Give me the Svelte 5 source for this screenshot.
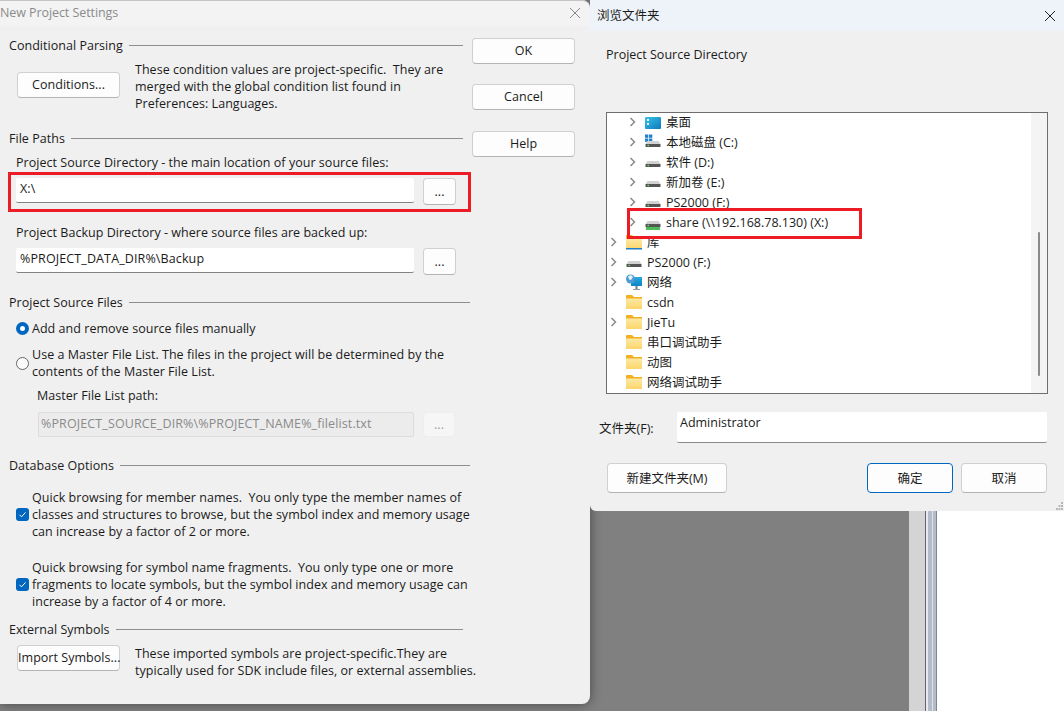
<script>
  const rows = [
    { lvl: 1, arrow: true, icon: 'desktop', text: '桌面' },
    { lvl: 1, arrow: true, icon: 'win', text: '本地磁盘 (C:)' },
    { lvl: 1, arrow: true, icon: 'drive', text: '软件 (D:)' },
    { lvl: 1, arrow: true, icon: 'drive', text: '新加卷 (E:)' },
    { lvl: 1, arrow: true, icon: 'drive', text: 'PS2000 (F:)' },
    { lvl: 1, arrow: true, icon: 'share', text: 'share (\\\\192.168.78.130) (X:)' },
    { lvl: 0, arrow: true, icon: 'lib', text: '库' },
    { lvl: 0, arrow: true, icon: 'drive', text: 'PS2000 (F:)' },
    { lvl: 0, arrow: true, icon: 'net', text: '网络' },
    { lvl: 0, arrow: false, icon: 'folder', text: 'csdn' },
    { lvl: 0, arrow: true, icon: 'folder', text: 'JieTu' },
    { lvl: 0, arrow: false, icon: 'folder', text: '串口调试助手' },
    { lvl: 0, arrow: false, icon: 'folder', text: '动图' },
    { lvl: 0, arrow: false, icon: 'folder', text: '网络调试助手' }
  ];
</script>

<div class="desk">
  <div class="side">
    <div class="gray"></div>
    <div class="rail"></div>
    <div class="strip"></div>
    <div class="white"></div>
  </div>

  <section class="dlg left">
    <header class="ltitle"><span>New Project Settings</span>
      <svg class="x" width="12" height="12" viewBox="0 0 12 12"><path d="M1 1l10 10M11 1L1 11" stroke="#8a8a8a" fill="none"/></svg>
    </header>
    <div class="lbody">
      <div class="lcol">
        <div class="head h1"><span>Conditional Parsing</span><i></i></div>
        <div class="cond">
          <button class="btn wide">Conditions...</button>
          <p>These condition values are project-specific.&nbsp; They are<br>merged with the global condition list found in<br>Preferences: Languages.</p>
        </div>
        <div class="head h2"><span>File Paths</span><i></i></div>
        <div class="lab l1">Project Source Directory - the main location of your source files:</div>
        <div class="pathrow">
          <div class="inp">X:\</div><button class="btn dots">...</button>
          <div class="red r1"></div>
        </div>
        <div class="lab l2">Project Backup Directory - where source files are backed up:</div>
        <div class="pathrow">
          <div class="inp">%PROJECT_DATA_DIR%\Backup</div><button class="btn dots">...</button>
        </div>
        <div class="head h3 long"><span>Project Source Files</span><i></i></div>
        <div class="opt o1"><span class="radio on"></span><span>Add and remove source files manually</span></div>
        <div class="opt o2"><span class="radio"></span><span>Use a Master File List. The files in the project will be determined by the<br>contents of the Master File List.</span></div>
        <div class="lab l3">Master File List path:</div>
        <div class="pathrow dis">
          <div class="inp off">%PROJECT_SOURCE_DIR%\%PROJECT_NAME%_filelist.txt</div><button class="btn dots offb">...</button>
        </div>
        <div class="head h4 long"><span>Database Options</span><i></i></div>
        <div class="opt o3"><span class="check"><svg width="13" height="13" viewBox="0 0 13 13"><path d="M3.5 6.8l2 2 4-4.4" stroke="#fff" fill="none"/></svg></span><span>Quick browsing for member names.&nbsp; You only type the member names of<br>classes and structures to browse, but the symbol index and memory usage<br>can increase by a factor of 2 or more.</span></div>
        <div class="opt o4"><span class="check"><svg width="13" height="13" viewBox="0 0 13 13"><path d="M3.5 6.8l2 2 4-4.4" stroke="#fff" fill="none"/></svg></span><span>Quick browsing for symbol name fragments.&nbsp; You only type one or more<br>fragments to locate symbols, but the symbol index and memory usage can<br>increase by a factor of 4 or more.</span></div>
        <div class="head h5"><span>External Symbols</span><i></i></div>
        <div class="cond ext">
          <button class="btn wide tight">Import Symbols...</button>
          <p>These imported symbols are project-specific.They are<br>typically used for SDK include files, or external assemblies.</p>
        </div>
      </div>
      <div class="rcol">
        <button class="btn act">OK</button>
        <button class="btn act">Cancel</button>
        <button class="btn act help">Help</button>
      </div>
    </div>
  </section>

  <section class="dlg right">
    <header class="rtitle"><span>浏览文件夹</span>
      <svg width="12" height="12" viewBox="0 0 12 12"><path d="M1 1l10 10M11 1L1 11" stroke="#222" fill="none"/></svg>
    </header>
    <div class="rbody">
      <div class="desc">Project Source Directory</div>
      <div class="tree">
        <svg class="defs" width="0" height="0" aria-hidden="true">
          <defs>
            <linearGradient id="deskg" x1="0" y1="0" x2="1" y2="1"><stop offset="0" stop-color="#35c3e8"/><stop offset="1" stop-color="#0f78bc"/></linearGradient>
            <linearGradient id="foldg" x1="0" y1="0" x2="0" y2="1"><stop offset="0" stop-color="#fde9a4"/><stop offset="1" stop-color="#fbd56a"/></linearGradient>
            <linearGradient id="monig" x1="0" y1="0" x2="0" y2="1"><stop offset="0" stop-color="#27a9e0"/><stop offset="1" stop-color="#1083c4"/></linearGradient>
          </defs>
        </svg>
        <div class="list">
          {#each rows as r}
            <div class="row" class:sub={r.lvl === 1}>
              <span class="chev">
                {#if r.arrow}<svg width="8" height="10" viewBox="0 0 8 10"><path d="M1.500 1l4 4-4 4" stroke="#8a8a8a" stroke-width="1.5" fill="none"/></svg>{/if}
              </span>
              <svg class="ico" width="16" height="16" viewBox="0 0 16 16">
                {#if r.icon === 'desktop'}
                  <rect x="0" y="3" width="16" height="12" rx="1" fill="url(#deskg)"/>
                  <rect x="2" y="5" width="2" height="2" fill="#e8f6fc"/>
                  <rect x="2" y="9" width="2" height="2" fill="#e8f6fc"/>
                {:else if r.icon === 'folder' || r.icon === 'lib'}
                  <path d="M0 2a1 1 0 0 1 1-1h5l2 2h8v12H0z" fill="#f0b020"/>
                  <rect x="0" y="4.500" width="16" height="10.500" fill="url(#foldg)"/>
                  {#if r.icon === 'lib'}<rect x="0" y="14" width="16" height="1.500" fill="#1f7fc8"/>{/if}
                {:else if r.icon === 'net'}
                  <rect x="5" y="3" width="11" height="9" fill="url(#monig)"/>
                  <rect x="9.500" y="12" width="2" height="3" fill="#6d7c88"/>
                  <rect x="7" y="15" width="7" height="1" fill="#8d99a3"/>
                  <circle cx="4.500" cy="5" r="4.500" fill="#4f9bd0"/>
                  <path d="M2 2.500l3-1.500 2 2-1.500 2.500-2 .5z" fill="#e4f2fb"/>
                {:else}
                  {#if r.icon === 'win'}
                    <rect x="0" y="0.500" width="3.300" height="3.300" fill="#1f82d0"/><rect x="4" y="0.500" width="3.300" height="3.300" fill="#1f82d0"/>
                    <rect x="0" y="4.500" width="3.300" height="3.300" fill="#1f82d0"/><rect x="4" y="4.500" width="3.300" height="3.300" fill="#1f82d0"/>
                  {/if}
                  <path d="M2.500 7h11l2 3h-15z" fill="#d2d2d2"/>
                  <rect x="0.500" y="10" width="15" height="3" rx=".5" fill="#555"/>
                  <rect x="2.500" y="10.800" width="1.500" height="1.300" fill="#5fe05f"/>
                  {#if r.icon === 'share'}<rect x="1" y="13" width="14" height="3" fill="#4cbb58"/>{/if}
                {/if}
              </svg>
              <span class="name">{r.text}</span>
            </div>
          {/each}
        </div>
        <div class="sbar"><b></b></div>
        <div class="red r2"></div>
      </div>
      <div class="folder"><label for="fld">文件夹(F):</label><div id="fld" class="finp">Administrator</div></div>
      <div class="foot">
        <button class="btn cn newf">新建文件夹(M)</button>
        <span class="sp"></span>
        <button class="btn cn ok">确定</button>
        <button class="btn cn">取消</button>
      </div>
    </div>
    <svg class="grip" width="8" height="8" viewBox="0 0 8 8"><g fill="#b8b8b8"><rect x="5" y="0" width="2" height="2"/><rect x="2.500" y="3" width="2" height="2"/><rect x="5" y="3" width="2" height="2"/><rect x="0" y="6" width="2" height="2"/><rect x="2.500" y="6" width="2" height="2"/><rect x="5" y="6" width="2" height="2"/></g></svg>
  </section>
</div>

<style>
  :global(body) { margin: 0; }
  .desk {
    position: relative; width: 1064px; height: 711px; overflow: hidden;
    background: #808080; color: #1b1b1b;
    font: 12.5px/17px "Open Sans", "Noto Sans CJK SC", sans-serif;
  }
  .side { position: absolute; inset: 0; display: flex; padding-left: 909px; }
  .gray { width: 16px; background: #d4d4d4; }
  .rail { width: 1px; background: #666; }
  .strip { width: 11px; background: linear-gradient(90deg,#e6eaf0 0 2px,#b4bcc9 2px 6px,#dfe4ea 6px 7px,#b4bcc9 7px 10px,#7d8796 10px); }
  .white { flex: 1; background: #fff; }
  .dlg { position: absolute; background: #f0f0f0; }
  .left { left: 0; top: 0; width: 590px; height: 704px; border-radius: 0 8px 8px 0; box-shadow: 0 0 12px rgba(0,0,0,.45); letter-spacing: .035px; }
  .right { left: 590px; top: 0; width: 474px; height: 511px; border-bottom-left-radius: 6px; display: flex; flex-direction: column; }
  .ltitle { height: 26px; background: #f3f3f3; color: #8b8b8b; display: flex; align-items: center; justify-content: space-between; padding: 0 9px 2px 0; border-top: 1px solid #c4c4c4; box-sizing: border-box; border-top-right-radius: 8px; letter-spacing: -.08px; }
  .lbody { display: flex; height: 678px; }
  .lcol { width: 472px; padding-left: 9px; box-sizing: border-box; }
  .rcol { display: flex; flex-direction: column; gap: 20px; padding-top: 12px; width: 103px; }
  .btn { font: inherit; letter-spacing: inherit; color: inherit; background: #fdfdfd; border: 1px solid #d0d0d0; border-bottom-color: #b4b4b4; border-radius: 4px; padding: 0; box-sizing: border-box; display: block; }
  .act { height: 26px; width: 103px; padding-bottom: 2px; }
  .help { margin-top: 1px; }
  .head { display: flex; align-items: center; gap: 6px; height: 17px; margin-right: 9px; }
  .head i { flex: 1; height: 1px; background: #8e8e8e; }
  .head.long { margin-right: 2px; }
  .h1 { margin-top: 11px; }
  .cond { display: flex; align-items: flex-start; gap: 15px; padding-left: 8px; margin-top: 7px; }
  .cond p { margin: 0; white-space: nowrap; }
  .cond .wide { flex: none; width: 103px; height: 26px; margin-top: 11px; padding-bottom: 2px; }
  .tight { white-space: nowrap; }
  .h2 { margin-top: 18px; }
  .lab { padding-left: 7px; white-space: nowrap; }
  .l1 { margin-top: 7px; }
  .l2 { margin-top: 19px; }
  .l3 { padding-left: 28px; margin-top: 7px; }
  .pathrow { position: relative; display: flex; gap: 9px; margin: 7px 0 0 7px; height: 27px; }
  .inp { width: 398px; height: 25px; background: #fff; border-bottom: 1px solid #838383; box-sizing: border-box; padding: 1px 4px; line-height: 19px; border-radius: 2px; letter-spacing: .12px; }
  .dots { width: 33px; height: 27px; line-height: 24px; }
  .dis { margin-left: 29px; margin-top: 8px; height: 25px; }
  .off { width: 376px; height: 25px; background: #ececec; border: 1px solid #dcdcdc; color: #8a8a8a; padding: 1px 2px; }
  .offb { width: 32px; height: 25px; background: #f6f6f6; border-color: #eee; color: #a0a0a0; }
  .red { position: absolute; border: 3px solid #ed1c24; box-sizing: border-box; pointer-events: none; }
  .r1 { left: -8px; top: -6px; width: 463px; height: 40px; }
  .r2 { left: 20px; top: 95px; width: 235px; height: 31px; }
  .h3 { margin-top: 19px; }
  .opt { display: flex; align-items: center; gap: 4px; padding-left: 7px; white-space: nowrap; }
  .opt > span:last-child { margin-left: -1px; }
  .o1 { margin-top: 9px; }
  .o2 { margin-top: 9px; }
  .o3 { margin-top: 15px; }
  .o4 { margin-top: 19px; }
  .radio { width: 13px; height: 13px; border-radius: 50%; border: 1px solid #666; box-sizing: border-box; background: #fcfcfc; flex: none; }
  .radio.on { border: 4px solid #0067c0; background: #fff; }
  .check { width: 13px; height: 13px; border-radius: 3px; background: #0067c0; flex: none; display: block; }
  .check svg { display: block; }
  .h4 { margin-top: 20px; }
  .h5 { margin-top: 11px; }
  .ext { margin-top: 7px; }
  .ext .wide { margin-top: 0; }
  .rtitle { height: 31px; flex: none; background: #eef3fa; display: flex; align-items: center; justify-content: space-between; padding: 0 8px 0 7px; }
  .rbody { flex: 1; padding: 0 17px 0 16px; display: flex; flex-direction: column; }
  .desc { margin-top: 15px; height: 17px; }
  .tree { position: relative; margin-top: 49px; height: 282px; box-sizing: border-box; border: 1px solid #6e6e6e; background: #fff; display: flex; justify-content: space-between; margin-right: -1px; }
  .defs { position: absolute; }
  .list { flex: 1; overflow: hidden; }
  .row { height: 20px; display: flex; align-items: center; padding-left: 2px; white-space: nowrap; position: relative; top: -1px; }
  .row.sub { padding-left: 21px; }
  .chev { width: 17px; flex: none; display: flex; padding-left: 1px; box-sizing: border-box; }
  .ico { flex: none; margin-right: 5px; }
  .sbar { width: 16px; background: #f4f4f4; position: relative; }
  .sbar b { position: absolute; left: 7px; top: 119px; width: 2px; height: 144px; background: #8a8a8a; border-radius: 1px; }
  .folder { display: flex; align-items: flex-start; margin-top: 18px; margin-left: -7px; }
  .folder label { width: 78px; padding-top: 8px; }
  .finp { flex: 1; height: 31px; background: #fff; border-bottom: 1px solid #8a8a8a; box-sizing: border-box; padding: 2px 3px; border-radius: 2px; }
  .foot { display: flex; gap: 8px; margin-top: 20px; padding-left: 1px; }
  .cn { width: 86px; height: 30px; }
  .newf { width: 120px; }
  .sp { flex: 1; }
  .ok { border: 1px solid #0067c0; }
  .grip { position: absolute; right: 0; bottom: 1px; }
</style>
